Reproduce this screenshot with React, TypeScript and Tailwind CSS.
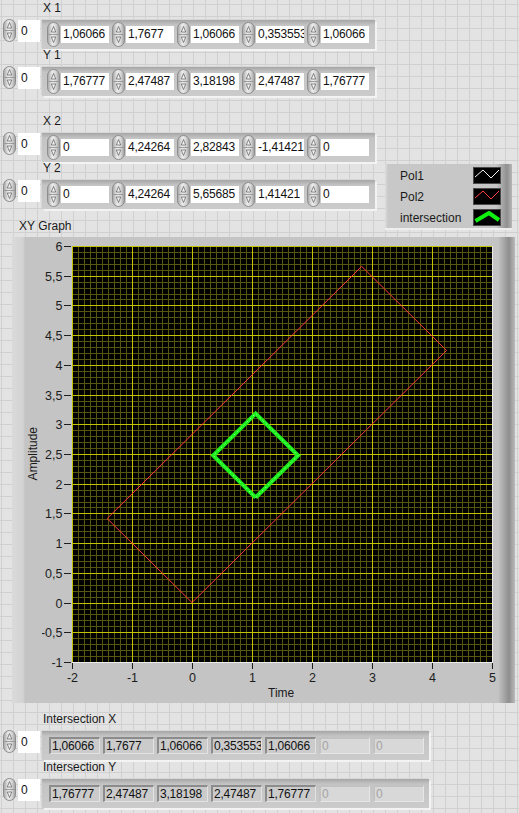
import React from "react";

const FONT = "font-['Liberation_Sans',Arial,sans-serif]";

function Spinner({ h }: { h: number }) {
  const m = h / 2;
  return (
    <svg width="13" height={h} viewBox={`0 0 13 ${h}`} className="block shrink-0">
      <defs>
        <linearGradient id="spinGrad" x1="0" y1="0" x2="1" y2="0">
          <stop offset="0" stopColor="#a3a3a3" />
          <stop offset="0.4" stopColor="#ececec" />
          <stop offset="0.7" stopColor="#d6d6d6" />
          <stop offset="1" stopColor="#9a9a9a" />
        </linearGradient>
      </defs>
      <rect x="0.5" y="0.5" width="12" height={h - 1} rx="6" ry="6" fill="url(#spinGrad)" stroke="#8d8d8d" />
      <line x1="1.5" x2="11.5" y1={m} y2={m} stroke="#8d8d8d" strokeWidth="0.8" />
      <path d={`M4.3 ${m - 2.5} L6.5 ${m - 8} L8.7 ${m - 2.5} Z`} fill="#f4f4f4" stroke="#6a6a6a" strokeWidth="0.8" strokeLinejoin="round" />
      <path d={`M4.3 ${m + 2.5} L6.5 ${m + 8} L8.7 ${m + 2.5} Z`} fill="#f4f4f4" stroke="#6a6a6a" strokeWidth="0.8" strokeLinejoin="round" />
    </svg>
  );
}

function IndexCtl() {
  return (
    <div className="flex items-start w-[42px] shrink-0 pl-[3px]">
      <div className="-mt-[1px]">
        <Spinner h={23} />
      </div>
      <div className="ml-[2px] w-[22px] h-[22px] bg-white pl-[3px] text-[12px] leading-[22px] text-[#111]">0</div>
    </div>
  );
}

function ControlArray({ label, values }: { label: string; values: string[] }) {
  return (
    <div className="flex flex-col">
      <div className="h-[12px] leading-[12px] text-[12px] pl-[43px] text-[#1a1a1a] whitespace-nowrap">{label}</div>
      <div className="flex items-start mt-[6px]">
        <IndexCtl />
        <div className="h-[29px] flex items-center gap-[3px] pl-[5px] pr-[6px] bg-[linear-gradient(to_bottom,#a6a6a6,#c4c4c4_5px,#cbcbcb)] shadow-[2px_2px_0_#f3f3f3,-1px_-1px_0_#d6d6d6]">
          {values.map((v, i) => (
            <div key={i} className="flex items-center gap-[1px]">
              <Spinner h={25} />
              <div className="w-[48px] h-[17px] bg-white pl-[2px] text-[12px] tracking-[-0.2px] leading-[17px] text-[#111] overflow-hidden whitespace-nowrap">
                {v}
              </div>
            </div>
          ))}
        </div>
      </div>
    </div>
  );
}

function IndicatorArray({ label, values }: { label: string; values: string[] }) {
  return (
    <div className="flex flex-col">
      <div className="h-[12px] leading-[12px] text-[12px] pl-[43px] text-[#1a1a1a] whitespace-nowrap">{label}</div>
      <div className="flex items-start mt-[6px]">
        <IndexCtl />
        <div className="h-[29px] flex items-center gap-[3px] pl-[7px] pr-[5px] bg-[linear-gradient(to_bottom,#a6a6a6,#c4c4c4_5px,#cbcbcb)] shadow-[2px_2px_0_#f3f3f3,-1px_-1px_0_#d6d6d6]">
          {values.map((v, i) => (
            <div
              key={i}
              className="w-[51px] h-[17px] bg-[#cbcbcb] border-t-2 border-l-2 border-r border-b border-t-[#8c8c8c] border-l-[#8c8c8c] border-r-[#e2e2e2] border-b-[#e2e2e2] pl-[1px] text-[12px] tracking-[-0.2px] leading-[14px] text-[#111] overflow-hidden whitespace-nowrap"
            >
              {v}
            </div>
          ))}
          {[0, 1].map((i) => (
            <div
              key={"d" + i}
              className="w-[51px] h-[17px] bg-[#d8d8d8] border-t-2 border-l-2 border-r border-b border-t-[#c2c2c2] border-l-[#c2c2c2] border-r-[#e6e6e6] border-b-[#e6e6e6] pl-[1px] text-[12px] leading-[14px] text-[#a4a4a4] overflow-hidden whitespace-nowrap"
            >
              0
            </div>
          ))}
        </div>
      </div>
    </div>
  );
}

function Swatch({ kind }: { kind: "white" | "red" | "green" }) {
  return (
    <svg width="28" height="17" viewBox="0 0 28 17" className="block">
      <rect x="0.5" y="0.5" width="27" height="16" fill="#000" stroke="#4a4a4a" />
      {kind === "green" ? (
        <polyline points="2.5,12 16,4 26,11" fill="none" stroke="#10f010" strokeWidth="4" strokeLinejoin="round" />
      ) : (
        <polyline
          points="2,10 10,3 18,11 26,3"
          fill="none"
          stroke={kind === "white" ? "#f4f4f4" : "#ff4040"}
          strokeWidth="1"
        />
      )}
    </svg>
  );
}

function Legend() {
  const rows: { name: string; kind: "white" | "red" | "green" }[] = [
    { name: "Pol1", kind: "white" },
    { name: "Pol2", kind: "red" },
    { name: "intersection", kind: "green" },
  ];
  return (
    <div className="mt-[2px] w-[127px] h-[64px] flex flex-col gap-[4px] pt-[3px] pl-[15px] pr-[11px] bg-[linear-gradient(to_right,#dedede,#c8c8c8_3px,#c6c6c6_calc(100%_-_16px),#909090_calc(100%_-_5px),#b6b6b6)] shadow-[0_2px_0_#eeeeee]">
      {rows.map((r) => (
        <div key={r.name} className="h-[17px] flex items-center justify-between">
          <span className="text-[12px] leading-[14px] text-[#1a1a1a]">{r.name}</span>
          <Swatch kind={r.kind} />
        </div>
      ))}
    </div>
  );
}

const UX = 60;
const UY = 416 / 7;
const PX = (v: number) => 30 + (v + 2) * UX;
const PY = (v: number) => 8 + (6 - v) * UY;

function Plot() {
  let minor = "";
  let major = "";
  for (let i = 0; i <= 70; i++) {
    const x = 30 + i * 6 + 0.5;
    const seg = `M${x} 8V424`;
    if (i % 10 === 0) major += seg;
    else minor += seg;
  }
  for (let j = 0; j <= 70; j++) {
    const y = Math.round(8 + (j * 416) / 70) + 0.5;
    const seg = `M30 ${y}H450`;
    if (j % 5 === 0) major += seg;
    else minor += seg;
  }
  const yTicks: number[] = [];
  for (let k = 0; k <= 14; k++) yTicks.push(6 - k * 0.5);
  const xTicks = [-2, -1, 0, 1, 2, 3, 4, 5];
  const fmt = (v: number) => String(v).replace(".", ",");

  const pol2: [number, number][] = [
    [0, 0],
    [4.24264, 4.24264],
    [2.82843, 5.65685],
    [-1.41421, 1.41421],
    [0, 0],
  ];
  const pol1: [number, number][] = [
    [1.06066, 1.76777],
    [1.7677, 2.47487],
    [1.06066, 3.18198],
    [0.353553, 2.47487],
    [1.06066, 1.76777],
  ];
  const pts = (a: [number, number][]) => a.map(([x, y]) => `${PX(x).toFixed(2)},${PY(y).toFixed(2)}`).join(" ");

  return (
    <svg width="463" height="446" viewBox="0 0 463 446" className="block">
      <rect x="30" y="8" width="421" height="417" fill="#000" />
      <path d={minor} stroke="#56560c" strokeWidth="1" fill="none" shapeRendering="crispEdges" />
      <path d={major} stroke="#c2c200" strokeWidth="1" fill="none" shapeRendering="crispEdges" />
      <path d="M450.5 8V425M30 424.5H451" stroke="#ececec" strokeWidth="1" fill="none" shapeRendering="crispEdges" />
      {yTicks.map((v) => {
        const y = Math.round(PY(v)) + 0.5;
        return (
          <g key={"y" + v}>
            <line x1="22" x2="29" y1={y} y2={y} stroke="#1e1e1e" strokeWidth="1" shapeRendering="crispEdges" />
            <text x="20.5" y={y + 4.5} textAnchor="end" fontSize="12.5" fill="#1c1c1c" fontFamily="'Liberation Sans', Arial, sans-serif">
              {fmt(v)}
            </text>
          </g>
        );
      })}
      {xTicks.map((v) => {
        const x = Math.round(PX(v)) + 0.5;
        return (
          <g key={"x" + v}>
            <line x1={x} x2={x} y1="425" y2="431" stroke="#1e1e1e" strokeWidth="1" shapeRendering="crispEdges" />
            <text x={x} y="444" textAnchor="middle" fontSize="12.5" fill="#1c1c1c" fontFamily="'Liberation Sans', Arial, sans-serif">
              {fmt(v)}
            </text>
          </g>
        );
      })}
      <polyline points={pts(pol2)} fill="none" stroke="#ff3a3a" strokeWidth="1" />
      <polyline points={pts(pol1)} fill="none" stroke="#1cf01c" strokeWidth="4" strokeLinejoin="miter" />
      <polyline points={pts(pol1)} fill="none" stroke="#d8ffd8" strokeWidth="0.8" strokeDasharray="1.5 3" opacity="0.8" />
    </svg>
  );
}

export default function App() {
  return (
    <div
      className={`${FONT} relative w-[519px] h-[813px] overflow-hidden bg-[#e3e3e3] bg-[linear-gradient(to_right,#d0d0d0_1px,transparent_1px),linear-gradient(to_bottom,#d0d0d0_1px,transparent_1px)] bg-[size:12px_12px] bg-[position:1px_4px] pt-[2px]`}
    >
      <ControlArray label="X 1" values={["1,06066", "1,7677", "1,06066", "0,353553", "1,06066"]} />
      <ControlArray label="Y 1" values={["1,76777", "2,47487", "3,18198", "2,47487", "1,76777"]} />
      <div className="mt-[19px]">
        <ControlArray label="X 2" values={["0", "4,24264", "2,82843", "-1,41421", "0"]} />
      </div>
      <div className="flex items-start">
        <div className="flex flex-col w-[385px] shrink-0">
          <ControlArray label="Y 2" values={["0", "4,24264", "5,65685", "1,41421", "0"]} />
          <div className="mt-[11px] pl-[19px] h-[12px] leading-[12px] text-[12px] text-[#1a1a1a]">XY Graph</div>
        </div>
        <Legend />
      </div>
      <div className="mt-[5px] ml-[12px] w-[503px] h-[466px] flex bg-[linear-gradient(to_right,#dadada,#d3d3d3_11px,#c4c4c4_13px,#c4c4c4_calc(100%_-_17px),#8e8e8e_calc(100%_-_6px),#bababa)]">
        <div className="w-[30px] shrink-0 pt-[190px] pl-[15px]">
          <div className="[writing-mode:vertical-rl] rotate-180 text-[12px] leading-[12px] text-[#1a1a1a] whitespace-nowrap">Amplitude</div>
        </div>
        <div className="flex flex-col pt-[1px]">
          <Plot />
          <div className="mt-[3px] ml-[226px] h-[12px] leading-[12px] text-[12px] text-[#1a1a1a]">Time</div>
        </div>
      </div>
      <div className="mt-[10px]">
        <IndicatorArray label="Intersection X" values={["1,06066", "1,7677", "1,06066", "0,353553", "1,06066"]} />
      </div>
      <div className="mt-[1px]">
        <IndicatorArray label="Intersection Y" values={["1,76777", "2,47487", "3,18198", "2,47487", "1,76777"]} />
      </div>
    </div>
  );
}
